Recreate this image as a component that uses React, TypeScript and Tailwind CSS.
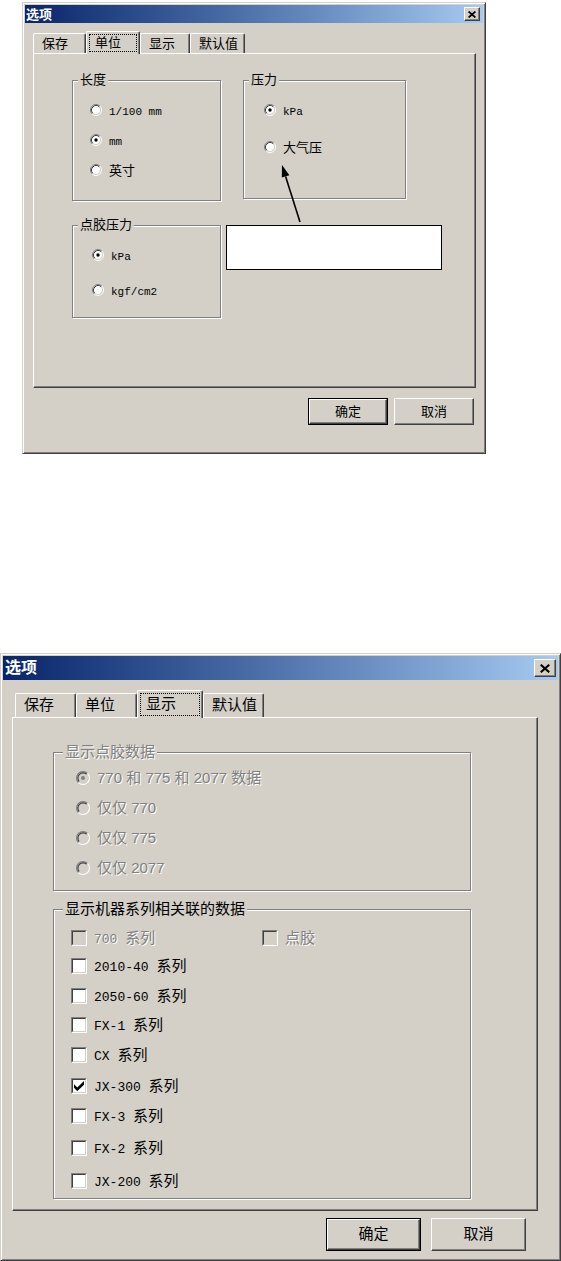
const CJK = /([\u4e00-\u9fff]+)/;

function Mixed({ text, latin, cjk }: { text: string; latin: string; cjk: string }) {
  const parts = text.split(CJK).filter(Boolean);
  return (
    <>
      {parts.map((p, i) =>
        CJK.test(p) ? (
          <span key={i} className={cjk}>{p}</span>
        ) : (
          <span key={i} className={latin}>{p}</span>
        )
      )}
    </>
  );
}

function RadioMark({ size, checked, disabled }: { size: number; checked?: boolean; disabled?: boolean }) {
  return (
    <svg width={size} height={size} viewBox="0 0 12 12" className="shrink-0">
      <circle cx="6" cy="6" r="4.5" fill={disabled ? "#d4d0c8" : "#fff"} />
      <path d="M2.11 9.89A5.5 5.5 0 0 1 9.89 2.11" fill="none" stroke="#808080" />
      <path d="M9.89 2.11A5.5 5.5 0 0 1 2.11 9.89" fill="none" stroke="#fff" />
      <path d="M2.82 9.18A4.5 4.5 0 0 1 9.18 2.82" fill="none" stroke="#404040" />
      <path d="M9.18 2.82A4.5 4.5 0 0 1 2.82 9.18" fill="none" stroke="#d4d0c8" />
      {checked && <circle cx="6" cy="6" r="1.7" fill={disabled ? "#808080" : "#000"} />}
    </svg>
  );
}

function CheckMark({ checked, disabled }: { checked?: boolean; disabled?: boolean }) {
  return (
    <span className="flex h-[16px] w-[16px] shrink-0 border border-[#808080] border-r-white border-b-white">
      <span
        className={`flex flex-1 items-center justify-center border border-[#404040] border-r-[#d4d0c8] border-b-[#d4d0c8] ${
          disabled ? "bg-[#d4d0c8]" : "bg-white"
        }`}
      >
        {checked && (
          <svg width="10" height="10" viewBox="0 0 7 7">
            <path d="M0 2.2L2.3 4.5L7 0V2.6L2.3 7.1L0 4.8Z" fill="#000" />
          </svg>
        )}
      </span>
    </span>
  );
}

function CloseBox({ big }: { big?: boolean }) {
  return (
    <span
      className={`flex items-center justify-center border border-white border-r-[#404040] border-b-[#404040] bg-[#d4d0c8] shadow-[inset_-1px_-1px_0_#808080] ${
        big ? "h-[18px] w-[22px]" : "h-[14px] w-[16px]"
      }`}
    >
      <svg width={big ? 10 : 8} height={big ? 9 : 7} viewBox="0 0 8 7">
        <path d="M0.6 0.5L7.4 6.5M7.4 0.5L0.6 6.5" stroke="#000" strokeWidth="1.7" />
      </svg>
    </span>
  );
}

function TitleBar({ big }: { big?: boolean }) {
  return (
    <div
      className={`flex shrink-0 items-center justify-between bg-linear-to-r from-[#0a246a] to-[#a6caf0] ${
        big ? "h-[24px] pl-[2px] pr-[2px] text-[16px]" : "h-[18px] pl-[1px] pr-[3px] text-[13px]"
      }`}
    >
      <span className="font-bold leading-none text-white">选项</span>
      <CloseBox big={big} />
    </div>
  );
}

type TabDef = { label: string; w: string };

function Tabs({ tabs, active, big }: { tabs: TabDef[]; active: number; big?: boolean }) {
  return (
    <div className={`flex items-end ${big ? "h-[27px] text-[15px]" : "h-[22px] text-[13px]"}`}>
      {tabs.map((t, i) =>
        i === active ? (
          <div
            key={t.label}
            className={`relative z-10 -mb-px flex rounded-t-[2px] border border-b-0 border-white border-r-[#404040] bg-[#d4d0c8] p-[2px] shadow-[inset_-1px_0_0_#808080] ${t.w} ${
              big ? "h-[28px]" : "h-[23px]"
            }`}
          >
            <span className="flex flex-1 items-center border border-dotted border-black pl-[5px] text-black">
              {t.label}
            </span>
          </div>
        ) : (
          <div
            key={t.label}
            className={`flex items-center rounded-t-[2px] border border-b-0 border-white border-r-[#404040] pl-[8px] text-black shadow-[inset_-1px_0_0_#808080] ${t.w} ${
              big ? "h-[24px]" : "h-[20px]"
            }`}
          >
            {t.label}
          </div>
        )
      )}
    </div>
  );
}

function Group({ title, cls, titleCls, children }: { title: string; cls: string; titleCls: string; children: React.ReactNode }) {
  return (
    <div className={`relative shrink-0 border border-[#808080] shadow-[1px_1px_0_#fff,inset_1px_1px_0_#fff] ${cls}`}>
      <span className={`absolute bg-[#d4d0c8] ${titleCls}`}>{title}</span>
      {children}
    </div>
  );
}

function Btn({ label, def, cls }: { label: string; def?: boolean; cls: string }) {
  const face = (
    <span className="flex flex-1 items-center justify-center border border-white border-r-[#404040] border-b-[#404040] bg-[#d4d0c8] text-black shadow-[inset_-1px_-1px_0_#808080]">
      {label}
    </span>
  );
  return def ? <div className={`flex border border-black ${cls}`}>{face}</div> : <div className={`flex ${cls}`}>{face}</div>;
}

const frame =
  "relative flex flex-col border border-[#d4d0c8] border-r-[#404040] border-b-[#404040] bg-[#d4d0c8] p-[2px] shadow-[inset_1px_1px_0_#fff,inset_-1px_-1px_0_#808080]";
const panel =
  "border border-white border-r-[#404040] border-b-[#404040] shadow-[inset_-1px_-1px_0_#808080]";
const smallTitle = "-top-[9px] left-[5px] px-[2px] text-[13px] leading-[16px] text-black";
const mono11 = "font-['Liberation_Mono',monospace] text-[11px]";
const cjk13 = "text-[13px]";

function SmallRadio({ label, checked }: { label: string; checked?: boolean }) {
  return (
    <div className="flex h-[20px] items-center gap-[7px] text-black">
      <RadioMark size={12} checked={checked} />
      <span>
        <Mixed text={label} latin={mono11} cjk={cjk13} />
      </span>
    </div>
  );
}

function TopDialog() {
  const tabs = [
    { label: "保存", w: "w-[53px]" },
    { label: "单位", w: "w-[54px]" },
    { label: "显示", w: "w-[50px]" },
    { label: "默认值", w: "w-[55px]" },
  ];
  return (
    <div className={`${frame} h-[452px] w-[464px]`}>
      <TitleBar />
      <div className="ml-[8px] mt-[8px]">
        <Tabs tabs={tabs} active={1} />
      </div>
      <div className={`${panel} ml-[8px] mr-[7px] h-[335px] pl-[38px] pt-[26px]`}>
        <div className="flex items-start">
          <Group title="长度" cls="h-[121px] w-[149px]" titleCls={smallTitle}>
            <div className="flex flex-col gap-[10px] pl-[17px] pt-[19px]">
              <SmallRadio label="1/100 mm" />
              <SmallRadio label="mm" checked />
              <SmallRadio label="英寸" />
            </div>
          </Group>
          <Group title="压力" cls="ml-[22px] h-[119px] w-[163px]" titleCls={smallTitle}>
            <div className="flex flex-col gap-[17px] pl-[20px] pt-[19px]">
              <SmallRadio label="kPa" checked />
              <SmallRadio label="大气压" />
            </div>
          </Group>
        </div>
        <div className="mt-[24px] flex items-start">
          <Group title="点胶压力" cls="h-[93px] w-[149px]" titleCls={smallTitle}>
            <div className="flex flex-col gap-[15px] pl-[19px] pt-[19px]">
              <SmallRadio label="kPa" checked />
              <SmallRadio label="kgf/cm2" />
            </div>
          </Group>
          <div className="ml-[5px] h-[45px] w-[216px] shrink-0 border border-black bg-white" />
        </div>
      </div>
      <div className="mt-[10px] flex justify-end gap-[6px] pr-[9px] text-[13px]">
        <Btn label="确定" def cls="h-[27px] w-[80px]" />
        <Btn label="取消" cls="h-[27px] w-[80px]" />
      </div>
      {/* callout arrow */}
      <svg className="absolute left-[252px] top-[158px]" width="40" height="70" viewBox="0 0 40 70">
        <path d="M25 61L10.6 15.4" stroke="#000" strokeWidth="1.6" />
        <path d="M7 4L14.4 14.2L6.8 16.6Z" fill="#000" />
      </svg>
    </div>
  );
}

const bigTitle = "-top-[11px] left-[9px] px-[2px] text-[15px] leading-[20px]";
const disabledText = "text-[#808080] [text-shadow:1px_1px_0_#fff]";
const sans15 = "font-['Liberation_Sans',sans-serif] text-[15px]";
const mono13 = "font-['Liberation_Mono',monospace] text-[13px]";
const cjk15 = "text-[15px]";

const dispenseRows = [
  { label: "770 和 775 和 2077 数据", checked: true },
  { label: "仅仅 770" },
  { label: "仅仅 775" },
  { label: "仅仅 2077" },
];

const seriesRows = [
  { label: "2010-40 系列", mt: "mt-[6px]" },
  { label: "2050-60 系列", mt: "mt-[8px]" },
  { label: "FX-1 系列", mt: "mt-[7px]" },
  { label: "CX 系列", mt: "mt-[8px]" },
  { label: "JX-300 系列", mt: "mt-[9px]", checked: true },
  { label: "FX-3 系列", mt: "mt-[8px]" },
  { label: "FX-2 系列", mt: "mt-[10px]" },
  { label: "JX-200 系列", mt: "mt-[11px]" },
];

function BottomDialog() {
  const tabs = [
    { label: "保存", w: "w-[61px]" },
    { label: "单位", w: "w-[61px]" },
    { label: "显示", w: "w-[66px]" },
    { label: "默认值", w: "w-[61px]" },
  ];
  return (
    <div className={`${frame} h-[608px] w-[561px]`}>
      <TitleBar big />
      <div className="ml-[12px] mt-[10px]">
        <Tabs tabs={tabs} active={2} big />
      </div>
      <div className={`${panel} ml-[9px] h-[494px] w-[526px] pl-[40px] pt-[34px]`}>
        <Group title="显示点胶数据" cls="h-[139px] w-[418px]" titleCls={`${bigTitle} ${disabledText}`}>
          <div className="flex flex-col gap-[8px] pl-[22px] pt-[14px]">
            {dispenseRows.map((r) => (
              <div key={r.label} className={`flex h-[22px] items-center gap-[7px] ${disabledText}`}>
                <RadioMark size={14} checked={r.checked} disabled />
                <span className="whitespace-pre">
                  <Mixed text={r.label} latin={sans15} cjk={cjk15} />
                </span>
              </div>
            ))}
          </div>
        </Group>
        <Group title="显示机器系列相关联的数据" cls="mt-[18px] h-[290px] w-[418px]" titleCls={`${bigTitle} text-black`}>
          <div className="flex flex-col pl-[17px] pt-[17px]">
            <div className={`flex h-[22px] items-center ${disabledText}`}>
              <div className="flex w-[191px] items-center gap-[7px]">
                <CheckMark disabled />
                <span>
                  <Mixed text="700 系列" latin={mono13} cjk={cjk15} />
                </span>
              </div>
              <div className="flex items-center gap-[7px]">
                <CheckMark disabled />
                <span className="text-[15px]">点胶</span>
              </div>
            </div>
            {seriesRows.map((r) => (
              <div key={r.label} className={`flex h-[22px] items-center gap-[7px] text-black ${r.mt}`}>
                <CheckMark checked={r.checked} />
                <span>
                  <Mixed text={r.label} latin={mono13} cjk={cjk15} />
                </span>
              </div>
            ))}
          </div>
        </Group>
      </div>
      <div className="mt-[7px] flex justify-end gap-[10px] pr-[32px] text-[15px]">
        <Btn label="确定" def cls="h-[33px] w-[95px]" />
        <Btn label="取消" cls="h-[33px] w-[95px]" />
      </div>
    </div>
  );
}

export default function App() {
  return (
    <div className="flex min-h-[1261px] w-[561px] flex-col bg-white font-['Liberation_Sans','Noto_Sans_CJK_SC',sans-serif]">
      <div className="ml-[22px] mt-[2px]">
        <TopDialog />
      </div>
      <div className="mt-[199px]">
        <BottomDialog />
      </div>
    </div>
  );
}
